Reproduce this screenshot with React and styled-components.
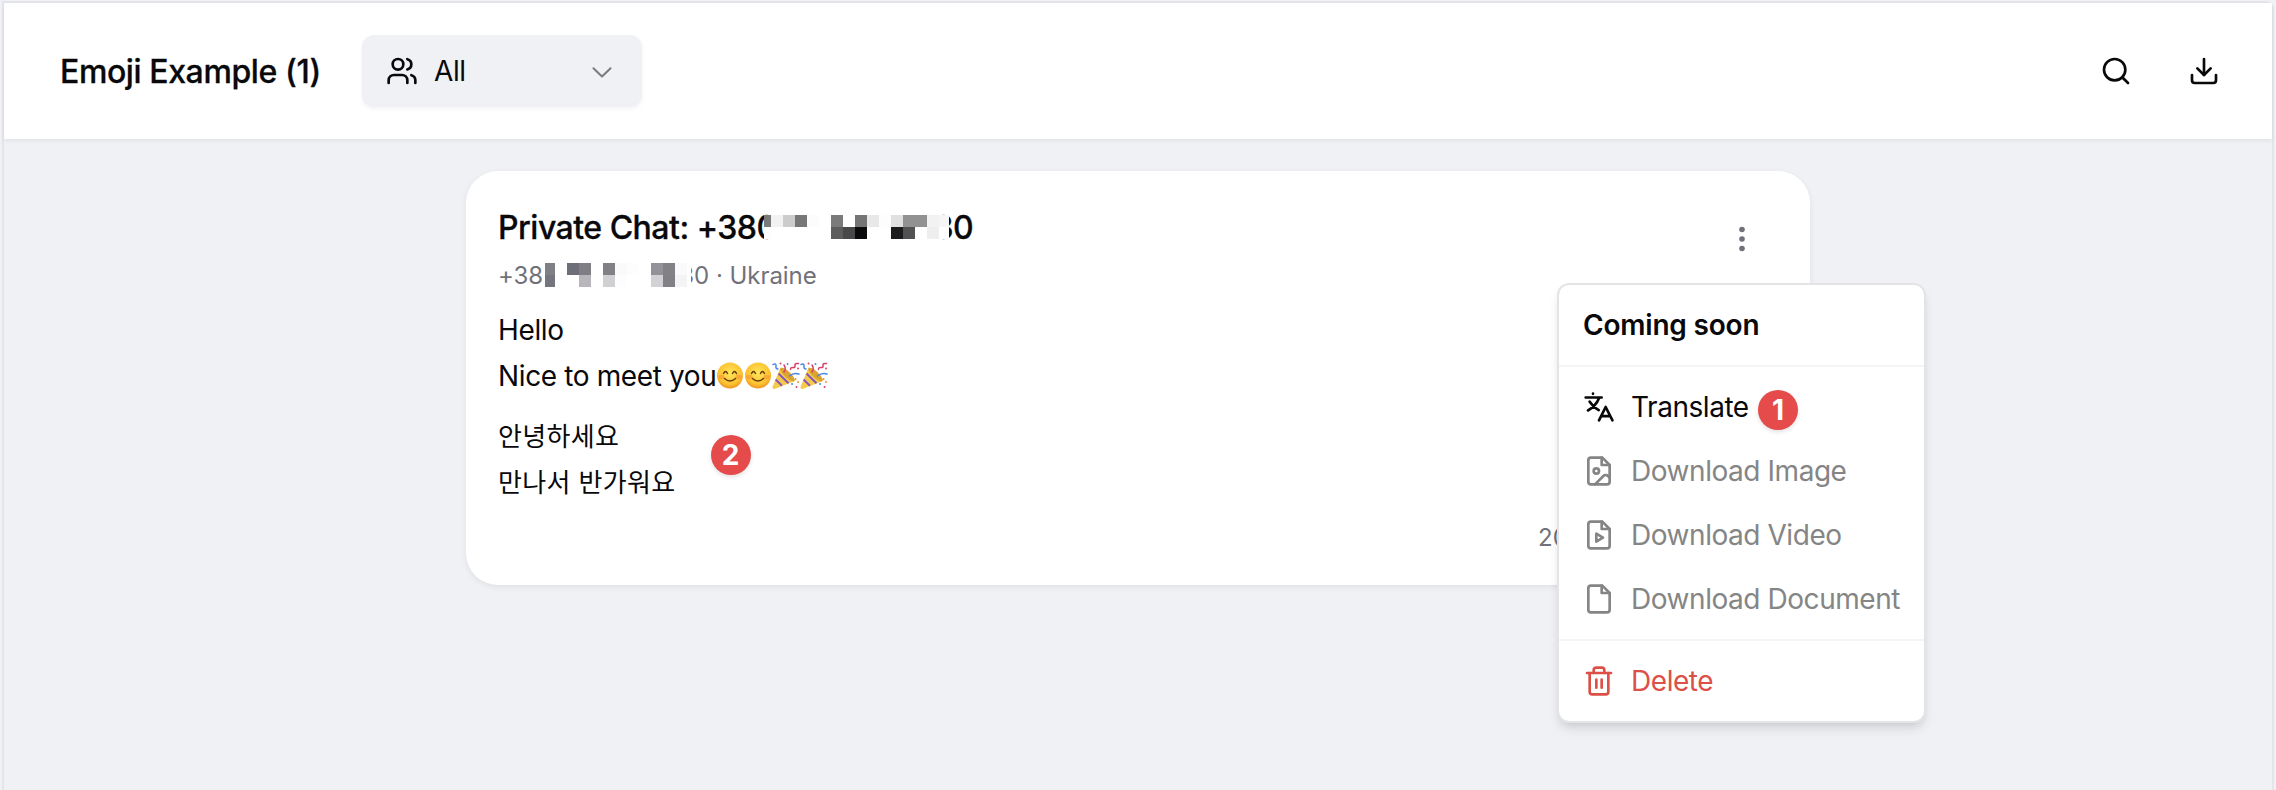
import React from "react";
import styled, { createGlobalStyle } from "styled-components";
import { Users, Search, Download, Trash2 } from "lucide-react";

const Global = createGlobalStyle`
  * { box-sizing: border-box; }
  body { margin: 0; background: #f0f1f5; font-family: Inter, "Noto Sans CJK KR", sans-serif; color: #09090b; }
  svg { display: block; flex: none; }
`;
const Frame = styled.div`
  height: 790px; padding: 1px 2px 0; overflow: hidden;
`;
const Page = styled.main`
  height: 800px; border: 2px solid #e4e5ea; border-top-right-radius: 8px;
`;
const Header = styled.header`
  height: 136px; display: flex; align-items: center; padding: 0 52px 0 56px;
  background: #fff; box-shadow: 0 2px 4px rgba(0,0,0,.06);
`;
const Title = styled.h1`
  margin: 0; padding-top: 2px; width: 302px; font-size: 32px; font-weight: 500; line-height: 44px; white-space: nowrap; letter-spacing: -.4px;
  -webkit-text-stroke: .3px currentColor;
`;
const Select = styled.button`
  display: flex; align-items: center; width: 280px; height: 72px; padding: 0 24px; border: 0; border-radius: 12px;
  background: #f0f1f5; font: 400 28px/40px Inter, sans-serif; color: #09090b; gap: 16px; letter-spacing: -.4px;
  box-shadow: 0 2px 4px rgba(0,0,0,.05);
  > svg:last-child { margin-left: auto; opacity: .5; }
`;
const Actions = styled.div`
  margin-left: auto; display: flex; gap: 56px;
`;
const Card = styled.article`
  position: relative; width: 1344px; height: 414px; margin: 32px 0 0 462px; padding: 32px;
  border-radius: 32px; background: #fff; box-shadow: 0 2px 6px rgba(0,0,0,.07);
`;
const ChatTitle = styled.h2`
  display: flex; align-items: center; margin: 0; height: 48px; font-size: 32px; font-weight: 500; white-space: nowrap; letter-spacing: -.5px;
  -webkit-text-stroke: .3px currentColor;
`;
const SubTitle = styled.p`
  display: flex; align-items: center; margin: 0; height: 48px; font-size: 24px; color: #71717a; white-space: nowrap; letter-spacing: -.05px;
`;
const Message = styled.p`
  margin: ${(p) => p.$gap}px 0 0; font-size: ${(p) => p.$size}px; line-height: 46px; letter-spacing: ${(p) => p.$tracking}px;
  span { display: flex; align-items: center; height: 46px; white-space: nowrap; }
`;
const MosaicSvg = styled.svg`
  position: relative; margin-left: ${(p) => p.$pull}px; margin-right: ${(p) => p.$pullEnd}px; background: #fff;
`;
const Time = styled.time`
  position: absolute; left: 1072px; top: 351px; font-size: 24px; line-height: 32px; color: #71717a;
`;
const MoreButton = styled.button`
  position: absolute; right: 52px; top: 52px; padding: 0; border: 0; background: none; color: #71717a;
`;
const Badge = styled.b`
  position: absolute; left: ${(p) => p.$x}px; top: ${(p) => p.$y}px; width: 40px; height: 40px; border-radius: 50%;
  display: grid; place-items: center; background: #e54b4b; color: #fff; font-size: 28px; line-height: 40px;
  box-shadow: 0 2px 4px rgba(0,0,0,.12);
`;
const Menu = styled.div`
  position: absolute; left: 1091px; top: 112px; width: 369px; height: 440px; border: 2px solid #e4e4e7; border-radius: 12px;
  background: #fff; box-shadow: 0 8px 12px -2px rgba(0,0,0,.1), 0 4px 8px -4px rgba(0,0,0,.1);
`;
const MenuHeading = styled.div`
  height: 80px; padding: 0 24px; line-height: 80px; font-size: 28px; font-weight: 600; letter-spacing: -.2px;
`;
const Divider = styled.hr`
  margin: 0; border: 0; height: 2px; background: #f4f4f5;
`;
const Group = styled.div`
  padding: 8px 0;
`;
const Item = styled.div`
  display: flex; align-items: center; gap: 16px; height: 64px; padding: 0 24px; font-size: 28px; white-space: nowrap; letter-spacing: -.45px;
  color: ${(p) => (p.$tone === "danger" ? "#dc5047" : p.$tone === "muted" ? "#858585" : "#09090b")};
`;

function Mosaic({ width, offset, rows, ...rest }) {
  return (
    <MosaicSvg width={width} height="24" shapeRendering="crispEdges" {...rest}>
      {rows.map((row, y) =>
        row.map((c, i) => c && <rect key={`${y}-${i}`} x={offset + i * 12} y={y * 12} width="12" height="12" fill={c} />)
      )}
    </MosaicSvg>
  );
}
const titleCells = [
  ["#7a7a7a", "#f2f2f2", "#ccc", "#777", "#fcfcfc", 0, "#7a7a7a", 0, "#757575", "#e8e8e8", "#fdfdfd", "#e0e0e0", "#929292", "#929292", "#f2f2f2", "#f6f6f6"],
  ["#fdfdfd", 0, 0, 0, 0, 0, "#5c5c5c", "#484848", "#0a0a0c", 0, 0, "#1c1c1e", "#525252", 0, "#eee", 0],
];
const phoneCells = [
  ["#7f8085", 0, "#6e6e78", "#7e7e84", 0, "#808085", "#fafafa", "#fdfdfd", 0, "#929298", "#828286", "#fafafa"],
  ["#75757f", 0, 0, "#b8b6bc", 0, "#d0d0d2", "#fdfdfd", 0, 0, "#d2d2d4", "#808085", "#f4f4f4"],
];

const Line = ({ children }) => (
  <svg width="32" height="32" viewBox="0 0 24 24" fill="none" stroke="currentColor" strokeWidth="2" strokeLinecap="round" strokeLinejoin="round">{children}</svg>
);
const FileIcon = ({ children }) => (
  <Line>
    <path d="M14.500 2H6a2 2 0 0 0-2 2v16a2 2 0 0 0 2 2h12a2 2 0 0 0 2-2V7.500Z" />
    <path d="M14 2v5.500h6" />
    {children}
  </Line>
);
const TranslateIcon = () => (
  <Line>
    <path d="M2 4.900h12M7.500 1.900v.2M12 5.500C10.500 9.300 7.500 12.500 3.700 14.600M5 8c1.800 2.800 4 4.800 6.800 6.400" />
    <path d="m12 22 5-10 5.100 10M13.800 18.800h6.500" />
  </Line>
);
const Chevron = () => (
  <svg width="32" height="32" viewBox="0 0 15 15" fill="none" stroke="currentColor" strokeWidth=".95" strokeLinecap="round" strokeLinejoin="round"><path d="m3.500 6.200 4 3.900 4-3.900" /></svg>
);
const Smile = () => (
  <svg width="28" height="28" viewBox="0 0 28 28" role="img" aria-label="smiling face">
    <defs><radialGradient id="face" cx=".5" cy=".4" r=".62"><stop offset="0" stopColor="#ffe55c" /><stop offset=".7" stopColor="#fcc331" /><stop offset="1" stopColor="#ea8f1e" /></radialGradient></defs>
    <circle cx="14" cy="13.500" r="13" fill="url(#face)" />
    <ellipse cx="5.500" cy="15" rx="3" ry="2.200" fill="#f47a32" opacity=".4" /><ellipse cx="22.500" cy="15" rx="3" ry="2.200" fill="#f47a32" opacity=".4" />
    <path d="M7.500 11.500q2-4 4 0M16.500 11.500q2-4 4 0M8.500 16.500q5.500 5 11 0" fill="none" stroke="#6b3d0c" strokeWidth="1.500" strokeLinecap="round" />
  </svg>
);
const Popper = () => (
  <svg width="28" height="28" viewBox="0 0 28 28" role="img" aria-label="party popper" fill="none" strokeLinecap="round">
    <path d="M8.500 5.500.5 25q-.2 2.300 2 2L23 19Q17 8 8.500 5.500Z" fill="#f5ca48" />
    <path d="m6.500 11.500 10 9.700M3.600 17.500l6.400 6.300" stroke="#8756bd" strokeWidth="2" strokeLinecap="butt" />
    <ellipse cx="15.500" cy="12.500" rx="9.500" ry="3" transform="rotate(43 15.500 12.500)" fill="#dba330" />
    <path d="M1 2.500q3.500-1.500 3 1.500t2 3M17.500 14q4-3.500 9.500-2" stroke="#4b86e8" strokeWidth="1.500" />
    <path d="M12 3q2.500 3.500 0 7M18.500 7.500q0-2.500 2.500-2t2-2 3.500-2" stroke="#d84268" strokeWidth="1.500" />
    <path d="M8.500 1.500h.1M26 6.500h.1M24.500 25h.1" stroke="#d84268" strokeWidth="1.800" />
    <path d="M20 22h.1M15.500 2h.1" stroke="#4b86e8" strokeWidth="1.800" /><path d="M23.500 17h.1M26 20h.1" stroke="#ee9038" strokeWidth="1.800" />
  </svg>
);

export default function App() {
  return (
    <Frame>
      <Global />
      <Page>
        <Header>
          <Title>Emoji Example (1)</Title>
          <Select><Users size={32} />All<Chevron /></Select>
          <Actions><Search size={32} /><Download size={32} /></Actions>
        </Header>
        <Card>
          <ChatTitle>Private Chat: +380<Mosaic width={185} offset={-5} rows={titleCells} $pull={-12.6} $pullEnd={-15.5} />30</ChatTitle>
          <SubTitle>+38<Mosaic width={146} offset={-2} rows={phoneCells} $pull={2} $pullEnd={-11.8} />30 · Ukraine</SubTitle>
          <Message $gap={8} $size={28} $tracking={-0.37}><span>Hello</span><span>Nice to meet you<Smile /><Smile /><Popper /><Popper /></span></Message>
          <Message $gap={15} $size={26} $tracking={0.35}><span>안녕하세요</span><span>만나서 반가워요</span></Message>
          <Time>20</Time>
          <MoreButton aria-label="More">
            <svg width="32" height="32" fill="currentColor"><circle cx="16" cy="6.500" r="2.800" /><circle cx="16" cy="16" r="2.800" /><circle cx="16" cy="25.500" r="2.800" /></svg>
          </MoreButton>
          <Badge $x={244.7} $y={264}>2</Badge>
          <Menu>
            <MenuHeading>Coming soon</MenuHeading>
            <Divider />
            <Group>
              <Item><TranslateIcon />Translate</Item>
              <Item $tone="muted"><FileIcon><circle cx="10" cy="12" r="2" /><path d="m20 17-1.296-1.296a2.410 2.410 0 0 0-3.408 0L9 22" /></FileIcon>Download Image</Item>
              <Item $tone="muted"><FileIcon><path d="m10 11 5 3-5 3v-6Z" /></FileIcon>Download Video</Item>
              <Item $tone="muted"><FileIcon />Download Document</Item>
            </Group>
            <Divider />
            <Group><Item $tone="danger"><Trash2 size={32} />Delete</Item></Group>
            <Badge $x={199} $y={105}>1</Badge>
          </Menu>
        </Card>
      </Page>
    </Frame>
  );
}
